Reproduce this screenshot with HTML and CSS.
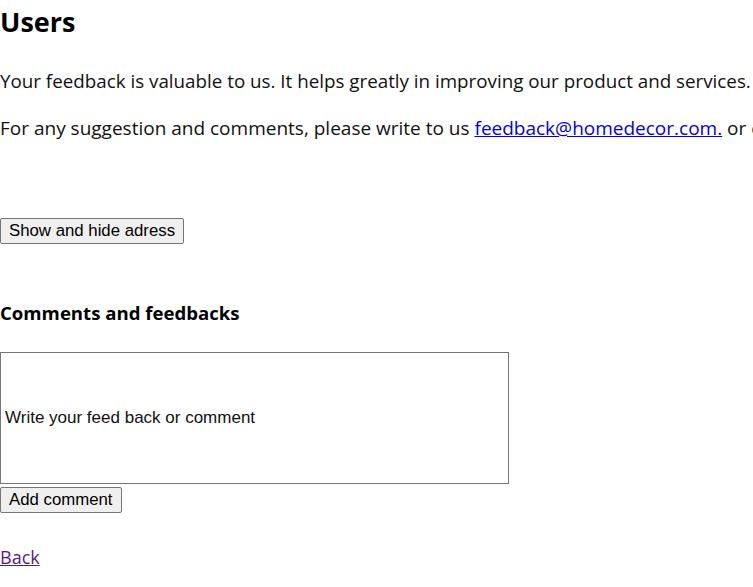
FILE: index.html
```html
<!DOCTYPE html>
<html lang="en">
<head>
<meta charset="utf-8">
<title>Users</title>
<link rel="stylesheet" href="styles.css">
</head>
<body>
<main class="page">
  <h1 class="title">Users</h1>
  <p class="text">Your feedback is valuable to us. It helps greatly in improving our product and services.</p>
  <p class="text text-contact">For any suggestion and comments, please write to us <a class="mail" href="#">feedback@homedecor.com.</a> or call us</p>
  <div class="address-row">
    <button class="btn" type="button">Show and hide adress</button>
  </div>
  <h3 class="subtitle">Comments and feedbacks</h3>
  <form class="comment-form">
    <input class="comment-input" type="text" placeholder="Write your feed back or comment">
    <button class="btn btn-add" type="button">Add comment</button>
  </form>
  <a class="back" href="#">Back</a>
</main>
</body>
</html>
```

FILE: styles.css
```css
html, body {
  margin: 0;
  padding: 0;
  background: #ffffff;
  overflow: hidden;
}

.page {
  font-family: "Open Sans", "Noto Sans", sans-serif;
  color: #000000;
  white-space: nowrap;
  display: flex;
  flex-direction: column;
  align-items: flex-start;
}

.title {
  margin: 0;
  font-size: 27px;
  font-weight: 700;
  line-height: 44px;
}

.text {
  margin: 24px 0 0;
  font-size: 18.8px;
  line-height: 27px;
  color: #111111;
}

.text + .text {
  margin-top: 20px;
}

.text-contact {
  font-size: 19px;
}

.mail {
  color: #0000ee;
  text-decoration: underline;
}

.address-row {
  margin-top: 76px;
}

.btn {
  font-family: Arial, "Liberation Sans", sans-serif;
  font-size: 16.8px;
  color: #000000;
  background: #efefef;
  border: 1px solid #767676;
  border-radius: 2px;
  padding: 3px 8px;
  margin: 0;
  line-height: 18px;
}

.subtitle {
  margin: 55px 0 0;
  font-size: 18.6px;
  font-weight: 700;
  line-height: 27px;
}

.comment-form {
  margin-top: 26px;
  display: flex;
  flex-direction: column;
  align-items: flex-start;
  gap: 3px;
}

.comment-input {
  box-sizing: border-box;
  width: 509px;
  height: 132px;
  margin: 0;
  padding: 0 4px;
  border: 1px solid #767676;
  font-family: Arial, "Liberation Sans", sans-serif;
  font-size: 17px;
}

.comment-input::placeholder {
  color: #111111;
  opacity: 1;
}

.back {
  margin-top: 31px;
  font-size: 18px;
  line-height: 27px;
  color: #551a8b;
  text-decoration: underline;
}
```
